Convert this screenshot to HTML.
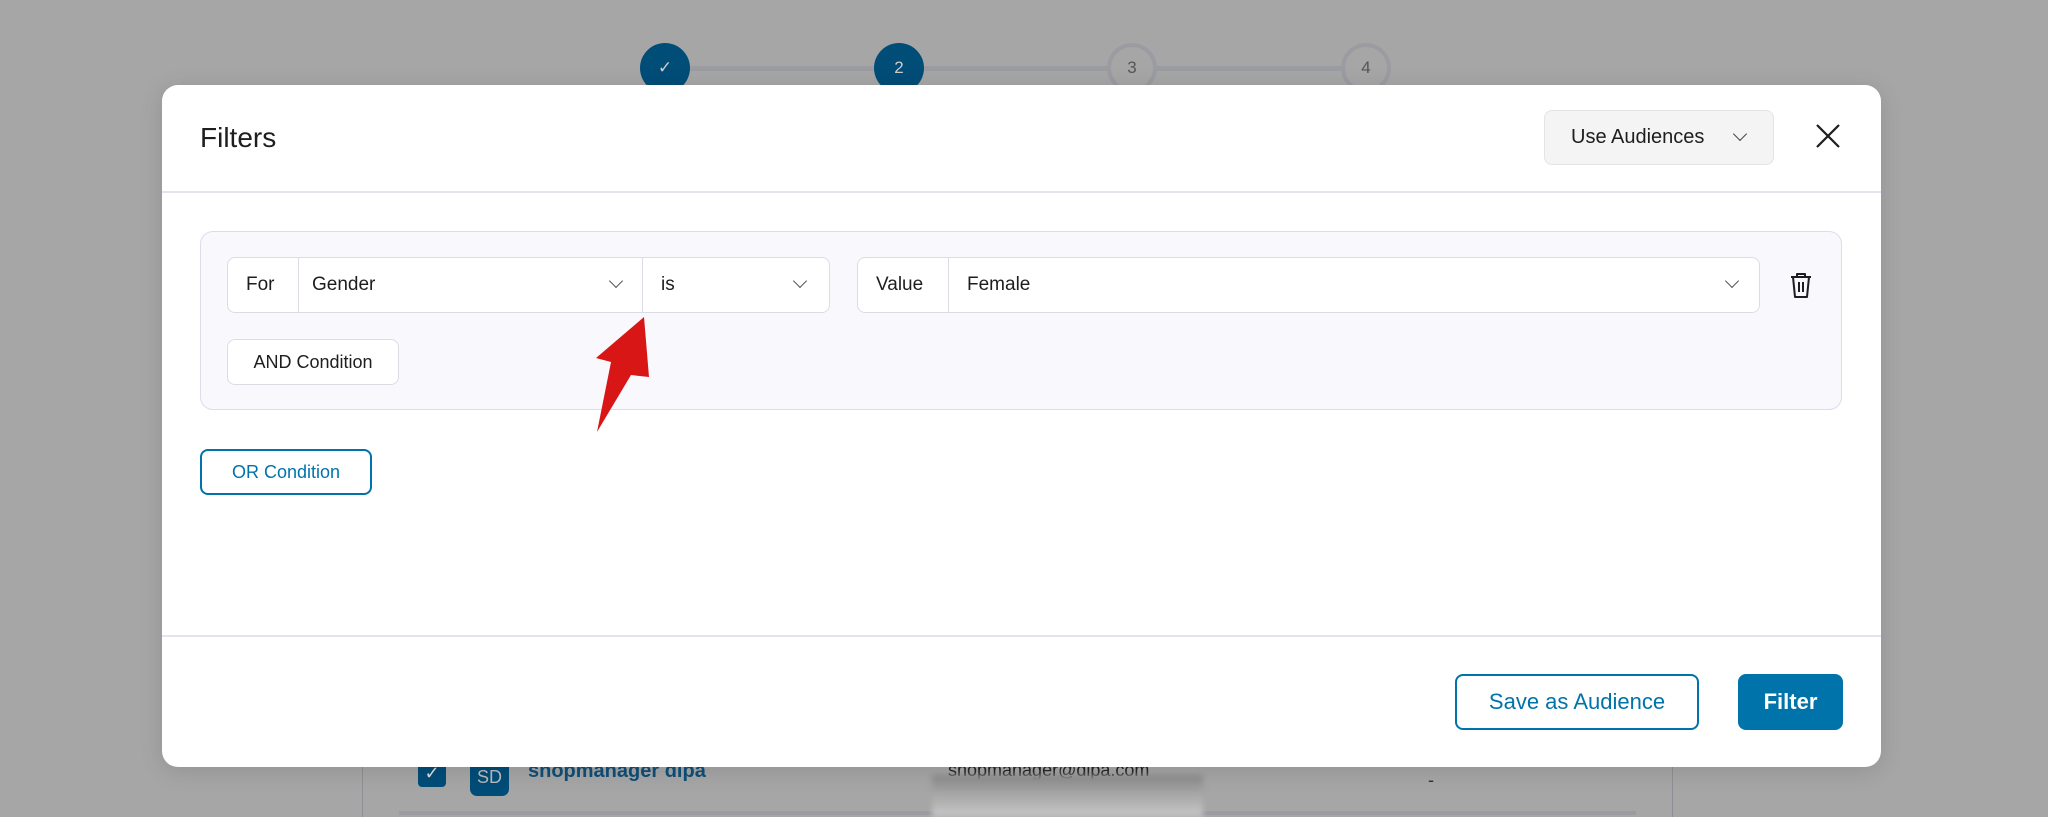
<!DOCTYPE html>
<html><head><meta charset="utf-8"><style>
*{box-sizing:border-box;margin:0;padding:0}
body{width:2048px;height:817px;background:#a6a6a6;position:relative;overflow:hidden;font-family:"Liberation Sans",sans-serif;color:#1e1e1e}
.abs{position:absolute}
.circ{position:absolute;width:50px;height:50px;border-radius:50%;top:43px;display:flex;align-items:center;justify-content:center;font-size:17px}
.line{position:absolute;top:66px;height:5px;background:#9b9ca2}
.modal{position:absolute;left:162px;top:85px;width:1719px;height:682px;background:#fff;border-radius:16px;box-shadow:0 4px 24px rgba(0,0,0,.12)}
.grp{position:absolute;height:56px;background:#fff;border:1px solid #dcdce6;border-radius:8px;display:flex;font-size:19px;align-items:center}
.seg{height:100%;display:flex;align-items:center;padding-left:18px;position:relative}
.chev{position:absolute;width:10px;height:10px;border-right:1.5px solid #555;border-bottom:1.5px solid #555;transform:rotate(45deg)}
.btn{position:absolute;display:flex;align-items:center;justify-content:center;border-radius:8px}
</style></head><body>
<div class="abs" style="left:362px;top:740px;width:1311px;height:77px;border-left:1px solid #8f8f95;border-right:1px solid #8f8f95"></div>
<div class="abs" style="left:399px;top:811px;width:1237px;height:4px;background:#9b9ca2"></div>
<div class="abs" style="left:418px;top:759px;width:28px;height:28px;background:#004d78;border-radius:4px;color:#ddd;font-size:18px;text-align:center;line-height:28px">✓</div>
<div class="abs" style="left:470px;top:759px;width:39px;height:37px;background:#004d78;border-radius:7px;color:#bbb;font-size:18px;text-align:center;line-height:37px">SD</div>
<div class="abs" style="left:528px;top:760px;font-size:20px;font-weight:bold;color:#0f4f78">shopmanager dipa</div>
<div class="abs" style="left:948px;top:760px;font-size:18px;color:#222">shopmanager@dipa.com</div>
<div class="abs" style="left:932px;top:775px;width:271px;height:42px;background:linear-gradient(#8a8a8a,#c8c8c8);filter:blur(3px)"></div>
<div class="abs" style="left:1428px;top:770px;font-size:18px;color:#333">-</div>
<div class="line" style="left:690px;width:184px"></div>
<div class="line" style="left:924px;width:184px"></div>
<div class="line" style="left:1157px;width:184px"></div>
<div class="circ" style="left:640px;background:#004d78;color:#ccc">✓</div>
<div class="circ" style="left:874px;background:#004d78;color:#ccc">2</div>
<div class="circ" style="left:1107px;border:4px solid #9b9ca2;color:#555">3</div>
<div class="circ" style="left:1341px;border:4px solid #9b9ca2;color:#555">4</div>

<div class="modal">
  <div class="abs" style="left:38px;top:37px;font-size:28px;color:#1e1e1e">Filters</div>
  <div class="btn" style="left:1382px;top:25px;width:230px;height:55px;background:#f4f4f4;border:1.5px solid #e4e4e4;font-size:20px;justify-content:flex-start;padding-left:26px">Use Audiences<span class="chev" style="left:190px;top:18px;border-color:#444"></span></div>
  <svg class="abs" style="left:1653px;top:38px" width="26" height="26" viewBox="0 0 26 26"><path d="M2 2L24 24M24 2L2 24" stroke="#1e1e1e" stroke-width="2.2"/></svg>
  <div class="abs" style="left:0;top:106px;width:100%;height:2px;background:#e4e4ee"></div>

  <div class="abs" style="left:38px;top:146px;width:1642px;height:179px;background:#f8f8fd;border:1.5px solid #dcdcec;border-radius:13px"></div>
  <div class="grp" style="left:65px;top:172px;width:603px">
    <div class="seg" style="width:71px;border-right:1px solid #dcdce6">For</div>
    <div class="seg" style="width:344px;border-right:1px solid #dcdce6;padding-left:13px">Gender<span class="chev" style="left:312px;top:18px"></span></div>
    <div class="seg" style="flex:1">is<span class="chev" style="left:152px;top:18px"></span></div>
  </div>
  <div class="grp" style="left:695px;top:172px;width:903px">
    <div class="seg" style="width:91px;border-right:1px solid #dcdce6;padding-left:18px">Value</div>
    <div class="seg" style="flex:1;padding-left:18px">Female<span class="chev" style="right:22px;top:18px"></span></div>
  </div>
  <svg class="abs" style="left:1627px;top:186px" width="24" height="28" viewBox="0 0 24 28"><path d="M2 6H22M8 6V3H16V6M4 6L6 26H18L20 6M10 11V21M14 11V21" fill="none" stroke="#1e1e1e" stroke-width="2" stroke-linejoin="round"/></svg>
  <div class="btn" style="left:65px;top:254px;width:172px;height:46px;background:#fff;border:1.5px solid #dcdce6;font-size:18px">AND Condition</div>
  <svg class="abs" style="left:430px;top:226px" width="70" height="130" viewBox="0 0 70 130"><path d="M52 6L4 47L19 51L5 121L39 64L57 66Z" fill="#d81616"/></svg>

  <div class="btn" style="left:38px;top:364px;width:172px;height:46px;border:2px solid #0073aa;color:#0073aa;font-size:18px">OR Condition</div>
  <div class="abs" style="left:0;top:550px;width:100%;height:2px;background:#e4e4ee"></div>
  <div class="btn" style="left:1293px;top:589px;width:244px;height:56px;border:2px solid #0073aa;color:#0073aa;font-size:22px">Save as Audience</div>
  <div class="btn" style="left:1576px;top:589px;width:105px;height:56px;background:#0073aa;color:#fff;font-size:22px;font-weight:bold">Filter</div>
</div>
</body></html>
